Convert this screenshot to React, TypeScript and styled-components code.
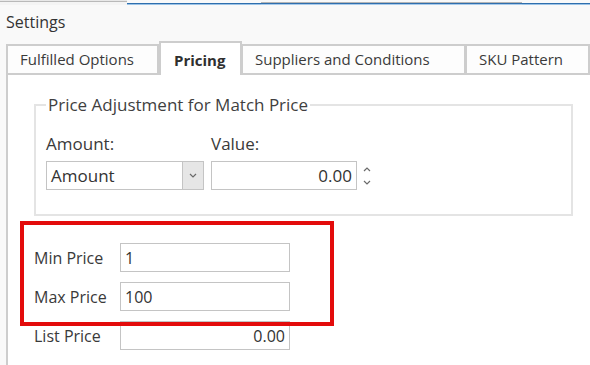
import React from "react";
import styled, { createGlobalStyle, css } from "styled-components";

const GlobalStyle = createGlobalStyle`
  html, body { margin: 0; padding: 0; }
  body {
    background: #f9f9f9;
    font-family: "Open Sans", "Noto Sans", Arial, sans-serif;
    color: #3a3a3a;
    width: 590px;
    height: 365px;
    overflow: hidden;
  }
`;

const Window = styled.div`
  width: 590px;
  height: 365px;
  display: flex;
  flex-direction: column;
  overflow: hidden;
  position: relative;
`;

const Strip = styled.div`
  display: flex;
  height: 5px;
  flex: none;
`;

type Tone = "grayHigh" | "blue" | "grayLow";

const Segment = styled.div<{ $w: number; $tone: Tone }>`
  width: ${(p) => p.$w}px;
  flex: none;
  ${(p) =>
    p.$tone === "grayHigh" &&
    css`
      background: linear-gradient(
        to bottom,
        #e8e8e8 0 1px,
        #b9b9b9 1px 2px,
        #f4f4f4 2px 5px
      );
    `}
  ${(p) =>
    p.$tone === "blue" &&
    css`
      background: linear-gradient(
        to bottom,
        #f9f9f9 0 3px,
        #2f6fae 3px 4px,
        #9cc3e6 4px 5px
      );
    `}
  ${(p) =>
    p.$tone === "grayLow" &&
    css`
      background: linear-gradient(
        to bottom,
        #f9f9f9 0 2px,
        #b5b5b5 2px 3px,
        #2f6fae 3px 4px,
        #a9cbeb 4px 5px
      );
    `}
`;

const Title = styled.div`
  height: 36px;
  flex: none;
  padding-left: 6px;
  font-size: 16px;
  line-height: 34px;
  color: #333;
`;

const TabRow = styled.div`
  display: flex;
  align-items: flex-end;
  padding-left: 6px;
  height: 34px;
  flex: none;
  position: relative;
  z-index: 1;
`;

const Tab = styled.div<{ $w: number; $active?: boolean }>`
  width: ${(p) => p.$w}px;
  box-sizing: border-box;
  flex: none;
  font-size: 15px;
  text-align: left;
  padding-left: 12px;
  color: #3a3a3a;
  background: #fdfdfd;
  border: 2px solid #cdcdcd;
  border-left-width: ${(p) => (p.$active ? 2 : 1)}px;
  height: 31px;
  line-height: 27px;
  white-space: nowrap;
  ${(p) =>
    p.$active &&
    css`
      height: 34px;
      line-height: 34px;
      padding-left: 13px;
      border-bottom: none;
      background: #fff;
      font-weight: 700;
      color: #2f2f2f;
    `}
  &:first-child {
    border-left-width: 2px;
  }
`;

const Panel = styled.div`
  flex: 1;
  margin-left: 6px;
  background: #fff;
  border-left: 2px solid #cdcdcd;
  padding: 19px 0 0 26px;
`;

const GroupBox = styled.fieldset`
  margin: 0;
  width: 539px;
  height: 122px;
  box-sizing: border-box;
  border: 2px solid #e4e4e4;
  padding: 0 10px;
`;

const Legend = styled.legend`
  font-size: 17px;
  line-height: 22px;
  padding: 0 2px;
  color: #3f3f3f;
`;

const FieldGrid = styled.div`
  display: flex;
  gap: 7px;
  margin-top: 17px;
`;

const Field = styled.div`
  display: flex;
  flex-direction: column;
  gap: 6px;
`;

const FieldLabel = styled.div`
  font-size: 17px;
  line-height: 22px;
  color: #3a3a3a;
`;

const Select = styled.div`
  width: 158px;
  height: 29px;
  box-sizing: border-box;
  border: 1px solid #c4c4c4;
  display: flex;
  background: #fff;
`;

const SelectText = styled.div`
  flex: 1;
  font-size: 17px;
  line-height: 28px;
  padding-left: 4px;
  color: #333;
`;

const DropButton = styled.div`
  width: 20px;
  background: #e6e6e6;
  border-left: 1px solid #c4c4c4;
  display: flex;
  align-items: center;
  justify-content: center;
`;

const SpinGroup = styled.div`
  display: flex;
  align-items: stretch;
  height: 29px;
`;

const NumberBox = styled.div<{
  $w: number;
  $align?: "left" | "right";
  $size?: number;
}>`
  width: ${(p) => p.$w}px;
  box-sizing: border-box;
  border: 1px solid #c4c4c4;
  background: #fff;
  font-size: ${(p) => p.$size ?? 16}px;
  line-height: 28px;
  height: 29px;
  padding: 0 4px;
  text-align: ${(p) => p.$align ?? "left"};
  color: #333;
`;

const Spinner = styled.div`
  width: 20px;
  height: 29px;
  display: flex;
  flex-direction: column;
  align-items: center;
  justify-content: center;
  gap: 8px;
`;

const PriceList = styled.div`
  display: flex;
  flex-direction: column;
  gap: 10px;
  margin-top: 27px;
`;

const PriceRow = styled.div`
  display: flex;
  align-items: center;
`;

const PriceLabel = styled.div`
  width: 86px;
  font-size: 16px;
  color: #3a3a3a;
`;

const Annotation = styled.div`
  position: absolute;
  left: 20px;
  top: 221px;
  width: 314px;
  height: 105px;
  box-sizing: border-box;
  border: 4px solid #e30b0b;
  pointer-events: none;
`;

const Chevron = ({ up }: { up?: boolean }) => (
  <svg width="8" height="5" viewBox="0 0 8 5">
    <path
      d={up ? "M1 4 L4 1 L7 4" : "M1 1 L4 4 L7 1"}
      fill="none"
      stroke="#6a6a6a"
      strokeWidth="1.2"
    />
  </svg>
);

export default function App() {
  return (
    <Window>
      <GlobalStyle />
      <Strip>
        <Segment $w={127} $tone="grayHigh" />
        <Segment $w={134} $tone="blue" />
        <Segment $w={261} $tone="grayLow" />
        <Segment $w={68} $tone="blue" />
      </Strip>
      <Title>Settings</Title>
      <TabRow>
        <Tab $w={153}>Fulfilled Options</Tab>
        <Tab $w={83} $active>
          Pricing
        </Tab>
        <Tab $w={224}>Suppliers and Conditions</Tab>
        <Tab $w={124}>SKU Pattern</Tab>
      </TabRow>
      <Panel>
        <GroupBox>
          <Legend>Price Adjustment for Match Price</Legend>
          <FieldGrid>
            <Field>
              <FieldLabel>Amount:</FieldLabel>
              <Select>
                <SelectText>Amount</SelectText>
                <DropButton>
                  <Chevron />
                </DropButton>
              </Select>
            </Field>
            <Field>
              <FieldLabel>Value:</FieldLabel>
              <SpinGroup>
                <NumberBox $w={146} $align="right" $size={17}>
                  0.00
                </NumberBox>
                <Spinner>
                  <Chevron up />
                  <Chevron />
                </Spinner>
              </SpinGroup>
            </Field>
          </FieldGrid>
        </GroupBox>
        <PriceList>
          <PriceRow>
            <PriceLabel>Min Price</PriceLabel>
            <NumberBox $w={170}>1</NumberBox>
          </PriceRow>
          <PriceRow>
            <PriceLabel>Max Price</PriceLabel>
            <NumberBox $w={170}>100</NumberBox>
          </PriceRow>
          <PriceRow>
            <PriceLabel>List Price</PriceLabel>
            <NumberBox $w={170} $align="right">
              0.00
            </NumberBox>
          </PriceRow>
        </PriceList>
      </Panel>
      <Annotation />
    </Window>
  );
}
